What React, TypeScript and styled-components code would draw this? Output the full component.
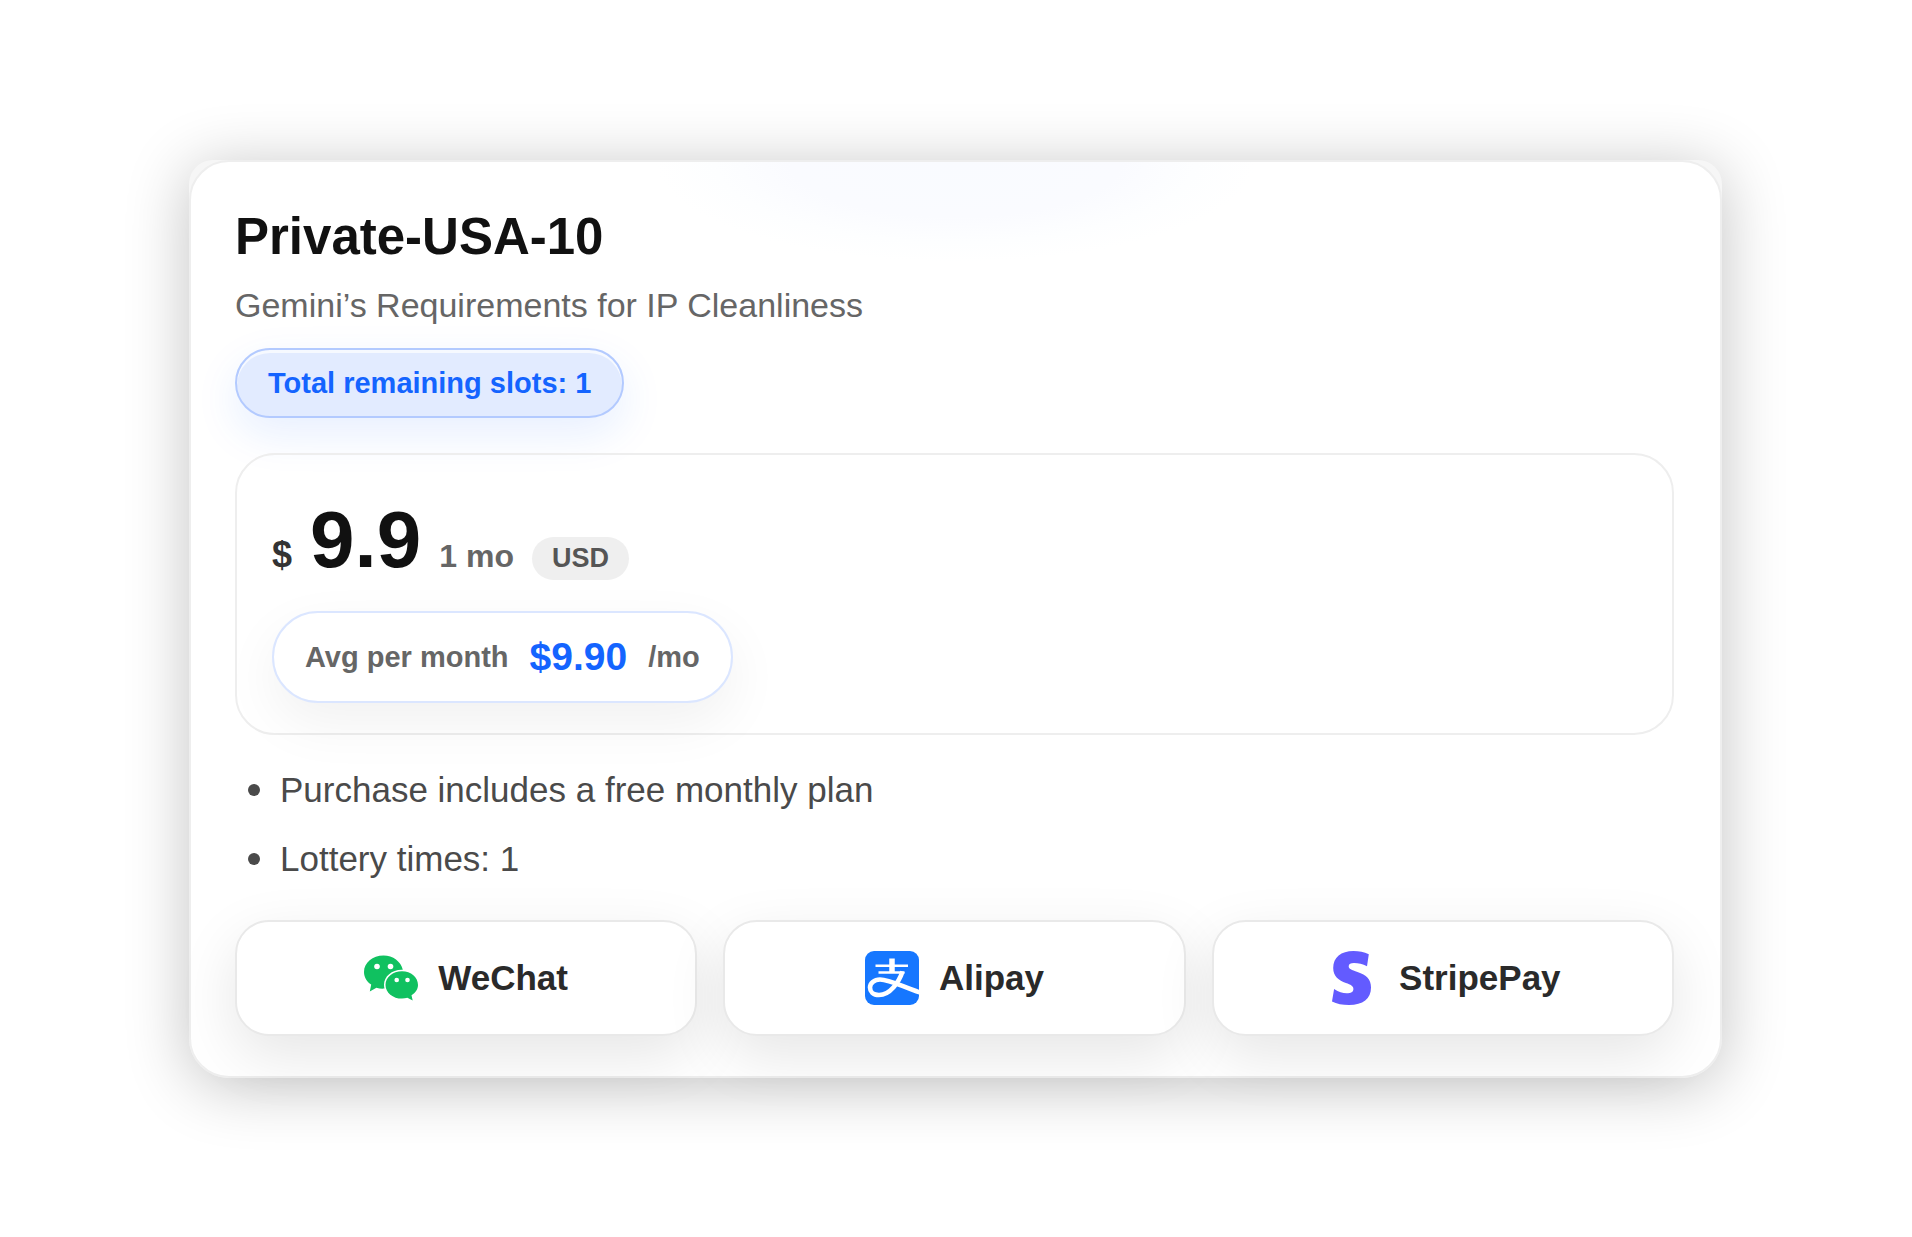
import React from "react";
import styled, { createGlobalStyle } from "styled-components";

const GlobalStyle = createGlobalStyle`
  * { box-sizing: border-box; }
  body {
    margin: 0;
    background: #fff;
    font-family: "Liberation Sans", Arial, sans-serif;
    color: #111;
  }
`;

const Page = styled.main`
  padding: 160px 190px 160px 189px;
`;

const Frame = styled.div`
  border-radius: 24px 24px 40px 40px;
  background: #f6f6f6;
  box-shadow: 0 8px 64px rgba(0, 0, 0, 0.24);
`;

const Card = styled.article`
  display: flex;
  flex-direction: column;
  align-items: flex-start;
  padding: 46px 46px 40px 44px;
  border: 2px solid #eeeeee;
  border-radius: 40px;
  background:
    radial-gradient(
      ellipse 300px 100px at 50% 0,
      #f9fbff 0%,
      #fafbff 55%,
      #fdfeff 80%,
      rgba(255, 255, 255, 0) 100%
    ),
    #fff;
`;

const Title = styled.h2`
  margin: 0;
  font-size: 51px;
  line-height: 58px;
  font-weight: 700;
`;

const Subtitle = styled.p`
  margin: 18px 0 22px;
  font-size: 34px;
  line-height: 42px;
  color: #666;
`;

const Slots = styled.span`
  padding: 16px 31px;
  border: 2px solid #b3caff;
  border-radius: 35px;
  background: #e2ebff;
  box-shadow: inset 0 3px 0 #f6f9ff, 0 16px 44px rgba(22, 100, 255, 0.1);
  font-size: 29px;
  line-height: 34px;
  font-weight: 700;
  color: #1464ff;
`;

const PriceBox = styled.section`
  align-self: stretch;
  display: flex;
  flex-direction: column;
  align-items: flex-start;
  gap: 23px;
  margin-top: 35px;
  padding: 37px 35px 30px;
  border: 2px solid #eeeeee;
  border-radius: 40px;
`;

const PriceRow = styled.div`
  display: flex;
  align-items: baseline;
  gap: 18px;
  font-weight: 700;
`;

const Currency = styled.span`
  font-size: 36px;
  color: #333;
`;

const Amount = styled.span`
  font-size: 80px;
  line-height: 96px;
`;

const Period = styled.span`
  font-size: 32px;
  color: #666;
`;

const Chip = styled.span`
  padding: 6px 20px;
  border-radius: 22px;
  background: #efefef;
  font-size: 27px;
  line-height: 31px;
  color: #555;
`;

const Average = styled.div`
  display: flex;
  align-items: center;
  gap: 21px;
  padding: 20px 31px;
  border: 2px solid #dbe6ff;
  border-radius: 46px;
  background: #fff;
  box-shadow: 0 20px 56px rgba(0, 0, 0, 0.06);
  font-size: 29px;
  line-height: 48px;
  font-weight: 700;
  color: #666;
`;

const AverageAmount = styled.strong`
  font-size: 39px;
  color: #1464ff;
`;

const Features = styled.ul`
  display: flex;
  flex-direction: column;
  gap: 20px;
  margin: 30px 0 37px;
  padding: 0 0 0 13px;
  list-style: none;
  font-size: 35px;
  line-height: 49px;
  color: #4a4a4a;
`;

const Feature = styled.li`
  display: flex;
  align-items: center;
  gap: 20px;

  &::before {
    content: "";
    width: 12px;
    height: 12px;
    border-radius: 50%;
    background: #4a4a4a;
  }
`;

const Payments = styled.div`
  align-self: stretch;
  display: grid;
  grid-template-columns: repeat(3, 1fr);
  gap: 26px;
`;

const PayButton = styled.button`
  display: flex;
  align-items: center;
  justify-content: center;
  gap: 20px;
  padding: 29px 20px;
  border: 2px solid #e9e9e9;
  border-radius: 34px;
  background: #fff;
  box-shadow: 0 20px 60px rgba(0, 0, 0, 0.1);
  font: inherit;
  font-size: 35px;
  font-weight: 700;
  color: #2a2a2a;
  cursor: pointer;
`;

const Logo = styled.svg`
  width: 54px;
  height: 54px;
  flex: none;
`;

const WeChatLogo = () => (
  <Logo viewBox="0 0 54 54" aria-hidden="true">
    <path fill="#10c160" d="M19.500 4.500C8.700 4.500 0 11.800 0 20.900c0 5.200 2.800 9.700 7.200 12.700L5.800 40.500l6.600-3.700c2.600.8 5.300 1 8.100.8A16 16 0 0 1 20 33.800c0-8.300 7.900-15 17.600-15h1.200C37 10.600 29 4.500 19.500 4.500Z" />
    <path fill="#10c160" d="M38 20.200c-9.100 0-16.500 6.100-16.500 13.700S28.900 47.600 38 47.600c1.900 0 3.700-.3 5.400-.8l5.300 2.700-1.200-5.300c4-2.500 6.500-6.200 6.500-10.300 0-7.600-7-13.700-16-13.700Z" />
    <circle cx="13" cy="15.500" r="2.800" fill="#fff" />
    <circle cx="26.500" cy="15.500" r="2.800" fill="#fff" />
    <circle cx="32.700" cy="29" r="2.300" fill="#fff" />
    <circle cx="43.500" cy="29" r="2.300" fill="#fff" />
  </Logo>
);

const AlipayLogo = () => (
  <Logo viewBox="0 0 54 54" aria-hidden="true">
    <rect width="54" height="54" rx="9" fill="#1677ff" />
    <g fill="none" stroke="#fff">
      <path strokeWidth="5.500" d="M27 7.500v14" />
      <path strokeWidth="2.600" d="M10.500 14.700h32.500M13.500 21.500h26" />
      <path strokeWidth="4.600" d="M37.500 20.500C34 31 25 44 14 44 8 44 5 40.500 5 36.500S9 28.500 15 28.500c10 0 24 8 40 13" />
    </g>
  </Logo>
);

const StripeLogo = () => (
  <Logo viewBox="0 0 54 54" aria-hidden="true">
    <path fill="#635bff" d="M43.800 3.200C39 1 34 0 28.500 0 16 0 8.200 6.300 8.200 17c0 8.500 5.600 12.200 12.700 15 4.800 1.700 7.500 2.900 7.500 5.900 0 3-2.500 4.300-6.700 4.300-4.200 0-7.900-1.200-12.600-4.200L7 50.500C11.700 53 17.500 54 24 54c14 0 22-6.200 22-17.500 0-8.500-4.500-12.300-13.500-15.500-6-2.200-8.800-3-8.800-5.700 0-2.200 2-3.300 5.300-3.300 4.300 0 8.700 1 13 3.300Z" />
  </Logo>
);

const features = ["Purchase includes a free monthly plan", "Lottery times: 1"];

const methods = [
  { name: "WeChat", Icon: WeChatLogo },
  { name: "Alipay", Icon: AlipayLogo },
  { name: "StripePay", Icon: StripeLogo },
];

export default function App() {
  return (
    <>
      <GlobalStyle />
      <Page>
        <Frame>
          <Card>
            <Title>Private-USA-10</Title>
            <Subtitle>Gemini’s Requirements for IP Cleanliness</Subtitle>
            <Slots>Total remaining slots: 1</Slots>
            <PriceBox>
              <PriceRow>
                <Currency>$</Currency>
                <Amount>9.9</Amount>
                <Period>1 mo</Period>
                <Chip>USD</Chip>
              </PriceRow>
              <Average>
                <span>Avg per month</span>
                <AverageAmount>$9.90</AverageAmount>
                <span>/mo</span>
              </Average>
            </PriceBox>
            <Features>
              {features.map((text) => (
                <Feature key={text}>{text}</Feature>
              ))}
            </Features>
            <Payments>
              {methods.map(({ name, Icon }) => (
                <PayButton key={name} type="button">
                  <Icon />
                  {name}
                </PayButton>
              ))}
            </Payments>
          </Card>
        </Frame>
      </Page>
    </>
  );
}
